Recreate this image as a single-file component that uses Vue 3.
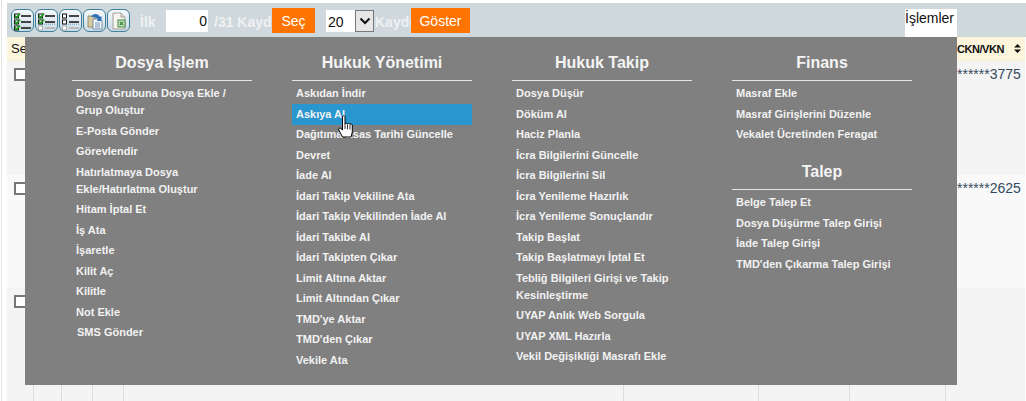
<script setup>
const col1 = [
  'Dosya Grubuna Dosya Ekle / Grup Oluştur',
  'E-Posta Gönder',
  'Görevlendir',
  'Hatırlatmaya Dosya Ekle/Hatırlatma Oluştur',
  'Hitam İptal Et',
  'İş Ata',
  'İşaretle',
  'Kilit Aç',
  'Kilitle',
  'Not Ekle',
  'SMS Gönder',
]
const col2 = [
  'Askıdan İndir',
  'Askıya Al',
  'Dağıtıma Esas Tarihi Güncelle',
  'Devret',
  'İade Al',
  'İdari Takip Vekiline Ata',
  'İdari Takip Vekilinden İade Al',
  'İdari Takibe Al',
  'İdari Takipten Çıkar',
  'Limit Altına Aktar',
  'Limit Altından Çıkar',
  "TMD'ye Aktar",
  "TMD'den Çıkar",
  'Vekile Ata',
]
const col3 = [
  'Dosya Düşür',
  'Döküm Al',
  'Haciz Planla',
  'İcra Bilgilerini Güncelle',
  'İcra Bilgilerini Sil',
  'İcra Yenileme Hazırlık',
  'İcra Yenileme Sonuçlandır',
  'Takip Başlat',
  'Takip Başlatmayı İptal Et',
  'Tebliğ Bilgileri Girişi ve Takip Kesinleştirme',
  'UYAP Anlık Web Sorgula',
  'UYAP XML Hazırla',
  'Vekil Değişikliği Masrafı Ekle',
]
const finans = ['Masraf Ekle', 'Masraf Girişlerini Düzenle', 'Vekalet Ücretinden Feragat']
const talep = ['Belge Talep Et', 'Dosya Düşürme Talep Girişi', 'İade Talep Girişi', "TMD'den Çıkarma Talep Girişi"]

const checkIcons = [
  [{ state: 'on', y: 3 }, { state: 'on', y: 9 }, { state: 'on', y: 15 }],
  [{ state: 'on', y: 3 }, { state: 'on', y: 9 }, { state: 'faint', y: 15 }],
  [{ state: 'off', y: 3 }, { state: 'off', y: 9 }, { state: 'faint', y: 15 }],
]

const rows = [
  { id: 1, ckn: '******3775' },
  { id: 2, ckn: '******2625' },
  { id: 3, ckn: '' },
]
const blankCols = 7
</script>

<template>
  <div class="page">
    <div class="toolbar">
      <div class="icons">
        <button v-for="(icon, i) in checkIcons" :key="i" class="icon-btn">
          <svg width="20" height="20" viewBox="0 0 20 20">
            <g v-for="row in icon" :key="row.y">
              <rect
                x="1.5"
                :y="row.y"
                width="4"
                height="4"
                fill="#fff"
                :stroke="row.state === 'faint' ? '#aaa' : '#111'"
              />
              <path v-if="row.state === 'on'" :d="`M2 ${row.y + 1.5} l1.6 2 l3.4 -4`" fill="none" stroke="#1c9a1c" stroke-width="1.8" />
              <rect
                x="8"
                :y="row.y + 1"
                width="10"
                height="2"
                :fill="row.state === 'faint' ? '#bbb' : '#444'"
              />
            </g>
            <path v-if="i > 0" d="M1 13.2h17" stroke="#47a" stroke-width="0.7" stroke-dasharray="1 1" />
          </svg>
        </button>
        <button class="icon-btn">
          <svg width="20" height="20" viewBox="0 0 20 20">
            <path d="M3 5h5l2 2v9H3z" fill="#d9c9a0" stroke="#8a7d60" stroke-width="0.8" />
            <path d="M8 8h7l2 2v8H8z" fill="#f4f7fb" stroke="#5c7a9c" stroke-width="0.8" />
            <path d="M10 12h5M10 14h5M10 16h5" stroke="#4a78b0" stroke-width="0.8" />
            <path d="M6 6c2-4 7-4 9 0l1.500-1v5h-5l1.600-1.500c-1.500-2-4-2.500-7-2.500z" fill="#2f6fb5" />
          </svg>
        </button>
        <button class="icon-btn">
          <svg width="20" height="20" viewBox="0 0 20 20">
            <path d="M4 2h8l4 4v12H4z" fill="#f5f5ef" stroke="#9a9a90" stroke-width="0.9" />
            <path d="M12 2v4h4" fill="#ddd" stroke="#9a9a90" stroke-width="0.9" />
            <rect x="9" y="9" width="7" height="7" fill="#cfe6c4" stroke="#3d8a3d" />
            <path d="M10.800 10.800l3.400 3.400M14.200 10.800l-3.400 3.400" stroke="#2a7a2a" stroke-width="1.100" />
          </svg>
        </button>
      </div>
      <span class="lbl first">İlk</span>
      <input class="page-input" value="0" />
      <span class="lbl total">/31 Kaydı</span>
      <button class="orange sec">Seç</button>
      <div class="select-box">
        <span class="select-val">20</span>
        <span class="select-arrow">
          <svg width="12" height="8" viewBox="0 0 12 8">
            <path d="M1.500 1.500L6 6l4.500-4.500" fill="none" stroke="#111" stroke-width="2" />
          </svg>
        </span>
      </div>
      <span class="lbl count">Kaydı</span>
      <button class="orange show">Göster</button>
      <div class="actions">İşlemler</div>
    </div>

    <div class="table">
      <div class="head">
        <div class="cell">Sec</div>
        <div v-for="n in blankCols" :key="n" class="cell"></div>
        <div class="cell ckn-head">
          CKN/VKN
          <svg class="sort" width="7" height="9" viewBox="0 0 7 9">
            <path d="M3.500 0L7 3.500H0zM3.500 9L0 5.500h7z" fill="#111" />
          </svg>
        </div>
      </div>
      <div v-for="row in rows" :key="row.id" :class="['row', 'row-' + row.id]">
        <div class="cell check-cell"><input type="checkbox" class="check" /></div>
        <div v-for="n in blankCols" :key="n" class="cell"></div>
        <div class="cell ckn">{{ row.ckn }}</div>
      </div>
    </div>

    <div class="menu">
      <div class="menu-col">
        <h3>Dosya İşlem</h3>
        <a v-for="item in col1" :key="item" :class="{ shifted: item === 'SMS Gönder' }">{{ item }}</a>
      </div>
      <div class="menu-col">
        <h3>Hukuk Yönetimi</h3>
        <a v-for="item in col2" :key="item" :class="{ active: item === 'Askıya Al' }">{{ item }}</a>
      </div>
      <div class="menu-col">
        <h3>Hukuk Takip</h3>
        <a v-for="item in col3" :key="item">{{ item }}</a>
      </div>
      <div class="menu-col">
        <h3>Finans</h3>
        <a v-for="item in finans" :key="item">{{ item }}</a>
        <h3 class="second">Talep</h3>
        <a v-for="item in talep" :key="item">{{ item }}</a>
      </div>
      <svg class="cursor" width="15" height="23" viewBox="0 0 15 23">
        <path
          d="M4.500 1.500C5 .5 6.500.5 7 1.500V9c.5-1 2-1 2.500 0 .5-.8 2-.8 2.500.3.5-.6 2-.5 2.300.7V17l-1.300 5H4.500L.8 15c-.7-1.500.7-2.500 2-1.500L4.500 15z"
          fill="#fff"
          stroke="#000"
          stroke-width="1"
        />
        <path d="M7 9v5M9.500 9.300v5M12 9.500v5" stroke="#000" stroke-width="0.8" fill="none" />
      </svg>
    </div>
  </div>
</template>

<style scoped>
.page {
  position: relative;
  width: 1026px;
  height: 401px;
  overflow: hidden;
  background: #fff;
  font-family: "Liberation Sans", Arial, sans-serif;
  box-sizing: border-box;
  padding-top: 3px;
  padding-left: 7px;
}

.page::before {
  content: "";
  position: absolute;
  left: 1px;
  top: 0;
  bottom: 0;
  width: 1px;
  background: #e4e4e4;
}

.toolbar {
  height: 34px;
  background: #cfd8dc;
  display: flex;
  align-items: flex-start;
  box-sizing: border-box;
  padding: 5px 0 0 4px;
}

.icons {
  display: flex;
  gap: 1px;
  margin-top: 1px;
}

.icon-btn {
  width: 23px;
  height: 23px;
  padding: 0;
  border: 1px solid #3f7f9c;
  border-radius: 6px;
  background: linear-gradient(#f4f8fa, #c9dbe6);
  display: flex;
  align-items: center;
  justify-content: center;
}

.lbl {
  color: #eef1f2;
  font-weight: bold;
  font-size: 14px;
  line-height: 16px;
  margin-top: 6px;
}

.first {
  margin-left: 10px;
  width: 26px;
}

.page-input {
  width: 42px;
  height: 22px;
  margin-top: 2px;
  padding: 0 1px 0 0;
  box-sizing: border-box;
  border: none;
  background: #fff;
  text-align: right;
  font: 14px "Liberation Sans", Arial, sans-serif;
  color: #111;
}

.total {
  margin-left: 6px;
  width: 58px;
  white-space: nowrap;
  overflow: hidden;
}

.orange {
  height: 25px;
  padding: 0;
  border: none;
  background: #ff7300;
  color: #fff;
  font: 14px "Liberation Sans", Arial, sans-serif;
}

.sec {
  width: 43px;
}

.select-box {
  display: flex;
  width: 48px;
  height: 22px;
  margin: 2px 0 0 11px;
  background: #fff;
}

.select-val {
  width: 29px;
  padding: 4px 0 0 2px;
  box-sizing: border-box;
  font-size: 14px;
  line-height: 16px;
  color: #111;
}

.select-arrow {
  width: 19px;
  box-sizing: border-box;
  border: 1px solid #777;
  background: #e6e6e6;
  display: flex;
  align-items: center;
  justify-content: center;
}

.count {
  margin-left: 1px;
  width: 36px;
}

.show {
  width: 59px;
}

.actions {
  margin-left: auto;
  margin-right: 69px;
  margin-top: 1px;
  width: 52px;
  height: 28px;
  background: #fff;
  color: #111;
  font-size: 14px;
  line-height: 18px;
  white-space: nowrap;
}

.table {
  width: 1017.5px;
}

.head,
.row {
  display: grid;
  grid-template-columns: 27px 27.5px 31px 31px 500.5px 135px 90.5px 96.5px 78.5px;
}

.head {
  height: 24px;
  background: #fdf6dd;
  border-bottom: 1px solid #f4efe0;
  box-sizing: border-box;
  color: #111;
}

.head .cell {
  font-size: 13px;
  line-height: 24px;
  padding-left: 4px;
}

.head .ckn-head {
  font-size: 11px;
  font-weight: bold;
  letter-spacing: -0.45px;
  padding-left: 11px;
  white-space: nowrap;
}

.sort {
  margin-left: 7px;
}

.row-1 {
  height: 114px;
  background: #f4f4f4;
}

.row-2 {
  height: 113px;
  background: #f9f9f9;
}

.row-3 {
  height: 113px;
  background: #f4f4f4;
}

.row .cell {
  border-right: 1px solid #dcdcdc;
  box-sizing: border-box;
}

.row .cell:last-child {
  border-right: none;
}

.row-1 .cell,
.row-2 .cell {
  border-right-color: transparent;
}

.check-cell {
  padding: 7px 0 0 7px;
}

.check {
  display: block;
  appearance: none;
  width: 13px;
  height: 13px;
  margin: 0;
  box-sizing: border-box;
  border: 2px solid #777;
  background: #fff;
}

.ckn {
  padding: 5px 0 0 11px;
  font-size: 14px;
  line-height: 16px;
  color: #34495e;
}

.menu {
  position: absolute;
  left: 25px;
  top: 37px;
  width: 932px;
  height: 348px;
  background: #808080;
  box-sizing: border-box;
  padding: 15px 0 0 47px;
  display: grid;
  grid-template-columns: repeat(4, 180px);
  column-gap: 40px;
  align-items: start;
}

.menu-col {
  display: flex;
  flex-direction: column;
}

h3 {
  margin: 0 0 2.5px;
  height: 28px;
  border-bottom: 1px solid #e6e6e6;
  font-size: 16px;
  font-weight: bold;
  line-height: 22px;
  text-align: center;
  color: #f4f4f4;
}

h3.second {
  margin-top: 16px;
}

a {
  display: block;
  padding: 1.75px 4px;
  font-size: 11px;
  font-weight: bold;
  line-height: 17px;
  color: #f2f2f2;
}

a.active {
  background: #2a96cf;
}

a.shifted {
  padding-left: 5px;
}

.cursor {
  position: absolute;
  left: 313px;
  top: 78px;
}
</style>

<style>
html,
body {
  margin: 0;
  background: #fff;
  overflow: hidden;
}
</style>
